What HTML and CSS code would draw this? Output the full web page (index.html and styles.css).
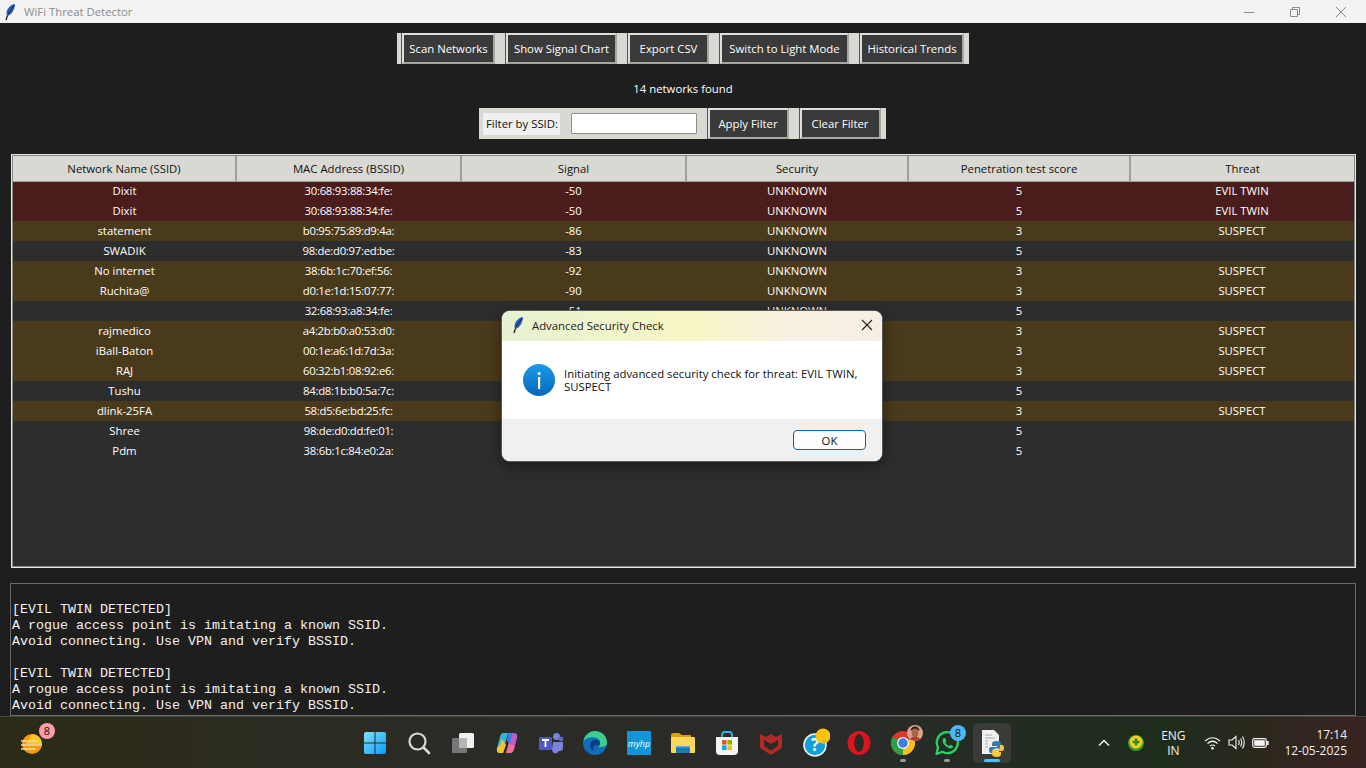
FILE: index.html
```html
<!DOCTYPE html>
<html lang="en">
<head>
    <meta charset="UTF-8">
    <title>WiFi Threat Detector</title>
    <link rel="stylesheet" href="styles.css">
</head>
<body>
    <svg class="defs" width="0" height="0">
        <symbol id="feather" viewBox="0 0 12 18">
            <path d="M2 17 L4 11" stroke="#111" stroke-width="1.2" fill="none"/>
            <path d="M3 13 C1 8 5 2 11 1 C11 6 8 12 3 13 Z" fill="#2f5fb0"/>
            <path d="M4 11 C6 8 8 5 10 2" stroke="#0b1c44" stroke-width="1" fill="none"/>
        </symbol>
    </svg>

    <header class="titlebar">
        <svg class="feather"><use href="#feather"/></svg>
        <span class="titlebar-text">WiFi Threat Detector</span>
        <div class="window-controls">
            <svg width="12" height="12" viewBox="0 0 12 12"><path d="M1 6.5 H11" stroke="#8a8a8a"/></svg>
            <svg width="12" height="12" viewBox="0 0 12 12"><path d="M1.5 3.5 H8.5 V10.5 H1.5 Z M3.5 3.5 V1.5 H10.5 V8.5 H8.5" stroke="#8a8a8a" fill="none"/></svg>
            <svg width="12" height="12" viewBox="0 0 12 12"><path d="M1 1 L11 11 M11 1 L1 11" stroke="#8a8a8a"/></svg>
        </div>
    </header>

    <main class="app">
        <div class="strip toolbar">
            <button class="tk-btn">Scan Networks</button>
            <button class="tk-btn">Show Signal Chart</button>
            <button class="tk-btn">Export CSV</button>
            <button class="tk-btn">Switch to Light Mode</button>
            <button class="tk-btn">Historical Trends</button>
        </div>

        <p class="status">14 networks found</p>

        <div class="strip filterbar">
            <label class="filter-label" for="ssid">Filter by SSID:</label>
            <input class="filter-input" id="ssid" type="text">
            <button class="tk-btn">Apply Filter</button>
            <button class="tk-btn">Clear Filter</button>
        </div>

        <div class="table-frame">
            <table class="networks">
                <thead>
                    <tr>
                        <th>Network Name (SSID)</th>
                        <th>MAC Address (BSSID)</th>
                        <th>Signal</th>
                        <th>Security</th>
                        <th>Penetration test score</th>
                        <th>Threat</th>
                    </tr>
                </thead>
                <tbody>
                    <tr class="evil"><td>Dixit</td><td>30:68:93:88:34:fe:</td><td>-50</td><td>UNKNOWN</td><td>5</td><td>EVIL TWIN</td></tr>
                    <tr class="evil"><td>Dixit</td><td>30:68:93:88:34:fe:</td><td>-50</td><td>UNKNOWN</td><td>5</td><td>EVIL TWIN</td></tr>
                    <tr class="suspect"><td>statement</td><td>b0:95:75:89:d9:4a:</td><td>-86</td><td>UNKNOWN</td><td>3</td><td>SUSPECT</td></tr>
                    <tr><td>SWADIK</td><td>98:de:d0:97:ed:be:</td><td>-83</td><td>UNKNOWN</td><td>5</td><td></td></tr>
                    <tr class="suspect"><td>No internet</td><td>38:6b:1c:70:ef:56:</td><td>-92</td><td>UNKNOWN</td><td>3</td><td>SUSPECT</td></tr>
                    <tr class="suspect"><td>Ruchita@</td><td>d0:1e:1d:15:07:77:</td><td>-90</td><td>UNKNOWN</td><td>3</td><td>SUSPECT</td></tr>
                    <tr><td></td><td>32:68:93:a8:34:fe:</td><td>-51</td><td>UNKNOWN</td><td>5</td><td></td></tr>
                    <tr class="suspect"><td>rajmedico</td><td>a4:2b:b0:a0:53:d0:</td><td></td><td></td><td>3</td><td>SUSPECT</td></tr>
                    <tr class="suspect"><td>iBall-Baton</td><td>00:1e:a6:1d:7d:3a:</td><td></td><td></td><td>3</td><td>SUSPECT</td></tr>
                    <tr class="suspect"><td>RAJ</td><td>60:32:b1:08:92:e6:</td><td></td><td></td><td>3</td><td>SUSPECT</td></tr>
                    <tr><td>Tushu</td><td>84:d8:1b:b0:5a:7c:</td><td></td><td></td><td>5</td><td></td></tr>
                    <tr class="suspect"><td>dlink-25FA</td><td>58:d5:6e:bd:25:fc:</td><td></td><td></td><td>3</td><td>SUSPECT</td></tr>
                    <tr><td>Shree</td><td>98:de:d0:dd:fe:01:</td><td></td><td></td><td>5</td><td></td></tr>
                    <tr><td>Pdm</td><td>38:6b:1c:84:e0:2a:</td><td></td><td></td><td>5</td><td></td></tr>
                </tbody>
            </table>
        </div>

        <pre class="log">

[EVIL TWIN DETECTED]
A rogue access point is imitating a known SSID.
Avoid connecting. Use VPN and verify BSSID.

[EVIL TWIN DETECTED]
A rogue access point is imitating a known SSID.
Avoid connecting. Use VPN and verify BSSID.</pre>
    </main>

    <div class="dialog">
        <div class="dialog-title">
            <svg class="feather"><use href="#feather"/></svg>
            <span>Advanced Security Check</span>
            <svg class="dialog-close" width="12" height="12" viewBox="0 0 12 12"><path d="M1 1 L11 11 M11 1 L1 11" stroke="#222" stroke-width="1.1"/></svg>
        </div>
        <div class="dialog-body">
            <svg class="info-icon" width="32" height="32" viewBox="0 0 32 32">
                <defs>
                    <linearGradient id="infoGrad" x1="0" y1="0" x2="0" y2="1">
                        <stop offset="0" stop-color="#1d9be6"/>
                        <stop offset="1" stop-color="#0668bd"/>
                    </linearGradient>
                </defs>
                <circle cx="16" cy="16" r="16" fill="url(#infoGrad)"/>
                <rect x="15" y="13" width="2.2" height="12" fill="#fff"/>
                <circle cx="16.1" cy="9.5" r="1.5" fill="#fff"/>
            </svg>
            <p class="dialog-text">Initiating advanced security check for threat: EVIL TWIN, SUSPECT</p>
        </div>
        <div class="dialog-footer">
            <button class="ok-btn">OK</button>
        </div>
    </div>

    <footer class="taskbar">
        <div class="task-left">
            <div class="task-icon">
                <svg width="26" height="26" viewBox="0 0 26 26">
                    <circle cx="14" cy="14" r="10" fill="#f59a0c"/>
                    <path d="M14 4 A10 10 0 0 1 24 14 H8 Z" fill="#ffc81e"/>
                    <path d="M3 11 H20 M3 15 H24 M3 19 H18" stroke="#f5d9a0" stroke-width="1.6"/>
                </svg>
                <span class="badge badge-pink">8</span>
            </div>
        </div>

        <div class="task-center">
            <div class="task-icon">
                <svg width="24" height="24" viewBox="0 0 24 24">
                    <defs>
                        <linearGradient id="winGrad" x1="0" y1="0" x2="1" y2="1">
                            <stop offset="0" stop-color="#7fe0fb"/>
                            <stop offset="1" stop-color="#0b9bf5"/>
                        </linearGradient>
                    </defs>
                    <path d="M1 3 Q1 1 3 1 H11.5 V11.5 H1 Z M12.5 1 H21 Q23 1 23 3 V11.5 H12.5 Z M1 12.5 H11.5 V23 H3 Q1 23 1 21 Z M12.5 12.5 H23 V21 Q23 23 21 23 H12.5 Z" fill="url(#winGrad)"/>
                </svg>
            </div>
            <div class="task-icon">
                <svg width="24" height="24" viewBox="0 0 24 24">
                    <circle cx="10.5" cy="10.5" r="8" fill="none" stroke="#d8d8d8" stroke-width="2.2"/>
                    <path d="M16.5 16.5 L22 22" stroke="#d8d8d8" stroke-width="2.6" stroke-linecap="round"/>
                </svg>
            </div>
            <div class="task-icon">
                <svg width="24" height="24" viewBox="0 0 24 24">
                    <rect x="8" y="2" width="15" height="15" rx="1.5" fill="#f0f0f0"/>
                    <rect x="1" y="7" width="15" height="15" rx="1.5" fill="#777"/>
                    <rect x="8" y="7" width="8" height="10" fill="#b5b5b5"/>
                </svg>
            </div>
            <div class="task-icon">
                <svg width="24" height="24" viewBox="0 0 24 24">
                    <path d="M8 2 H13 L8 22 H5 Q1 22 2 17 L5 6 Q6 2 8 2 Z" fill="#35b3d8"/>
                    <path d="M5 14 L7 8 L11 14 L8 22 H5 Q1 22 2 17 Z" fill="#f2c23a"/>
                    <path d="M16 22 H11 L16 2 H19 Q23 2 22 7 L19 18 Q18 22 16 22 Z" fill="#c45ac8"/>
                    <path d="M13 2 H18 L15 12 L12 10 Z" fill="#3d7fe0"/>
                    <path d="M11 22 L14 13 L20 15 L18 20 Q17 22 15 22 Z" fill="#f0709a"/>
                </svg>
            </div>
            <div class="task-icon">
                <svg width="26" height="26" viewBox="0 0 26 26">
                    <circle cx="18.5" cy="6.5" r="3.5" fill="#7b83d8"/>
                    <circle cx="23" cy="9" r="2.4" fill="#5f67c0"/>
                    <path d="M15 12 H25 V18 Q25 21 22 21 H21 Q19 24 16 23 Q14 22 14 19 Z" fill="#7b83d8"/>
                    <rect x="1" y="7" width="13" height="13" rx="1.5" fill="#5059c0"/>
                    <path d="M4 10 H11 M7.5 10 V17" stroke="#fff" stroke-width="1.8"/>
                </svg>
            </div>
            <div class="task-icon">
                <svg width="26" height="26" viewBox="0 0 26 26">
                    <circle cx="13" cy="13" r="12" fill="#0f6fb8"/>
                    <path d="M1.5 11 C3 4 9 1 13 1 C20 1 25 6 25 13 C25 16 22 17 18 17 C14 17 19 15 18 11 C17 7 6 5 1.5 11 Z" fill="#3ecf8e"/>
                    <path d="M8 15 C8 11 12 9 15 10 C18 11 19 14 17 16 C14 14 10 16 12 21 C9 20 8 18 8 15 Z" fill="#0a3f86"/>
                </svg>
            </div>
            <div class="task-icon">
                <svg width="24" height="24" viewBox="0 0 24 24">
                    <rect width="24" height="24" fill="#0f96d7"/>
                    <text class="myhp-text" x="12" y="15.5" text-anchor="middle">myhp</text>
                </svg>
            </div>
            <div class="task-icon">
                <svg width="24" height="24" viewBox="0 0 24 24">
                    <path d="M0 4 Q0 2 2 2 H8 L11 4 H20 V9 H0 Z" fill="#d9a00f"/>
                    <rect y="6" width="24" height="16" rx="1" fill="#fcd75a"/>
                    <rect x="5" y="15" width="14" height="7" rx="1" fill="#1a78c2"/>
                    <rect x="5" y="15" width="14" height="1.5" fill="#52aee8"/>
                </svg>
            </div>
            <div class="task-icon">
                <svg width="24" height="24" viewBox="0 0 24 24">
                    <path d="M7 7 V4 Q7 1 10 1 H14 Q17 1 17 4 V7" stroke="#2fb5e8" stroke-width="1.8" fill="none"/>
                    <path d="M1 6 H23 V20 Q23 24 19 24 H5 Q1 24 1 20 Z" fill="#f4f4f4"/>
                    <rect x="7" y="9" width="4.6" height="4.6" fill="#f25022"/>
                    <rect x="12.4" y="9" width="4.6" height="4.6" fill="#7fba00"/>
                    <rect x="7" y="14.4" width="4.6" height="4.6" fill="#00a4ef"/>
                    <rect x="12.4" y="14.4" width="4.6" height="4.6" fill="#ffb900"/>
                </svg>
            </div>
            <div class="task-icon">
                <svg width="24" height="24" viewBox="0 0 24 24">
                    <path d="M1 3 L7 6 L12 3 L17 6 L23 3 V17 L12 24 L1 17 Z M5 9 V15 L12 19.5 L19 15 V9 L12 13 Z" fill="#b02a26" fill-rule="evenodd"/>
                </svg>
            </div>
            <div class="task-icon">
                <svg width="30" height="30" viewBox="0 0 30 30">
                    <circle cx="15" cy="17" r="11" fill="#12a0dc" stroke="#f2f2f2" stroke-width="1.6"/>
                    <text class="help-text" x="15" y="23" text-anchor="middle">?</text>
                    <circle cx="23" cy="8" r="7.5" fill="#fcc20a"/>
                </svg>
            </div>
            <div class="task-icon">
                <svg width="24" height="24" viewBox="0 0 24 24">
                    <ellipse cx="12" cy="12" rx="11.5" ry="12" fill="#d9151d"/>
                    <ellipse cx="12" cy="12" rx="4.8" ry="9" fill="#2a2b26"/>
                </svg>
            </div>
            <div class="task-icon has-dot">
                <svg width="26" height="26" viewBox="0 0 26 26">
                    <circle cx="13" cy="13" r="12" fill="#d93a2e"/>
                    <path d="M13 13 L2.6 7 A12 12 0 0 0 13 25 Z" fill="#2f9e48"/>
                    <path d="M13 13 L23.4 7 A12 12 0 0 1 13 25 Z" fill="#f6c120"/>
                    <circle cx="13" cy="13" r="6" fill="#f2f2f2"/>
                    <circle cx="13" cy="13" r="4.7" fill="#3a7ee8"/>
                </svg>
                <svg class="avatar" width="16" height="16" viewBox="0 0 16 16">
                    <circle cx="8" cy="8" r="8" fill="#e0a090"/>
                    <path d="M3.5 6 Q4 1.5 8 1.5 Q12 1.5 12.5 6 L11 5 H5 Z" fill="#2c1c14"/>
                    <ellipse cx="8" cy="8" rx="3.4" ry="4.4" fill="#a9684a"/>
                    <path d="M2.5 14 Q8 9.5 13.5 14 Q8 17.5 2.5 14 Z" fill="#b03a30"/>
                </svg>
            </div>
            <div class="task-icon has-dot">
                <svg width="26" height="26" viewBox="0 0 26 26">
                    <path d="M2.5 24 L4 17.5 A10.5 10.5 0 1 1 8.2 21.8 Z" fill="none" stroke="#25d366" stroke-width="2.3" stroke-linejoin="round"/>
                    <path d="M9 8.5 L11 8 L12.5 11 L11.3 12.5 Q12.5 15 15 16 L16.5 14.7 L19 16.3 L18.5 18 Q15.5 19.5 11.5 16 Q7.5 12.5 9 8.5 Z" fill="#25d366"/>
                </svg>
                <span class="badge badge-blue">8</span>
            </div>
            <div class="task-icon active">
                <svg width="26" height="28" viewBox="0 0 26 28">
                    <path d="M3 1 H15 L20 6 V25 H3 Z" fill="#f1f1f1"/>
                    <path d="M6 6 H13 M6 9 H16 M6 12 H9 M6 15 H9 M6 18 H9" stroke="#a8a8a8"/>
                    <path d="M17 12 Q13 12 13 15 V17 H18 V18 H12 Q10 18 10 21 Q10 24 12 24 H14 V22 Q14 19.5 17 19.5 H20 Q22 19.5 22 17.5 V15 Q22 12 17 12 Z" fill="#3b78ab"/>
                    <path d="M18 28 Q22 28 22 25 V23 H17 V22 H23 Q25 22 25 19 Q25 16 23 16 H21 V18 Q21 20.5 18 20.5 H15 Q13 20.5 13 22.5 V25 Q13 28 18 28 Z" fill="#f7c93e"/>
                </svg>
            </div>
        </div>

        <div class="task-tray">
            <svg class="tray-chevron" width="12" height="8" viewBox="0 0 12 8"><path d="M1 6.5 L6 1.5 L11 6.5" fill="none" stroke="#f2f2f2" stroke-width="1.5"/></svg>
            <svg class="tray-guard" width="16" height="16" viewBox="0 0 16 16">
                <circle cx="8" cy="8" r="8" fill="#3f9a2d"/>
                <circle cx="8" cy="7" r="6.5" fill="#f0d21e"/>
                <path d="M8 3.5 V10.5 M4.5 7 H11.5" stroke="#2e8a2b" stroke-width="2.6"/>
            </svg>
            <div class="tray-lang"><span>ENG</span><span>IN</span></div>
            <div class="tray-status">
                <svg width="17" height="14" viewBox="0 0 17 14">
                    <path d="M1 5 Q8.5 -1.5 16 5 M3.5 7.5 Q8.5 3 13.5 7.5 M6 10 Q8.5 8 11 10" fill="none" stroke="#f2f2f2" stroke-width="1.2"/>
                    <circle cx="8.5" cy="12.3" r="1.3" fill="#f2f2f2"/>
                </svg>
                <svg width="17" height="15" viewBox="0 0 17 15">
                    <path d="M1 5 H4 L8 1.5 V13.5 L4 10 H1 Z" fill="none" stroke="#f2f2f2" stroke-width="1.1"/>
                    <path d="M10.5 5 Q12 7.5 10.5 10 M12.5 3.5 Q15 7.5 12.5 11.5 M14.5 1.5 Q18 7.5 14.5 13.5" fill="none" stroke="#f2f2f2" stroke-width="1.1"/>
                </svg>
                <svg width="17" height="10" viewBox="0 0 17 10">
                    <rect x="0.7" y="0.7" width="13.6" height="8.6" rx="1.8" fill="none" stroke="#f2f2f2" stroke-width="1.2"/>
                    <rect x="2.2" y="2.2" width="10.6" height="5.6" fill="#f2f2f2"/>
                    <rect x="15" y="3" width="1.6" height="4" fill="#f2f2f2"/>
                </svg>
            </div>
            <div class="tray-clock"><span>17:14</span><span>12-05-2025</span></div>
        </div>
    </footer>
</body>
</html>
```

FILE: styles.css
```css
* {
    box-sizing: border-box;
}

html, body {
    margin: 0;
    height: 768px;
    overflow: hidden;
}

body {
    font-family: 'Open Sans', 'Noto Sans', sans-serif;
    font-size: 11.35px;
    background-color: #1e1e1e;
    display: flex;
    flex-direction: column;
    position: relative;
}

.defs {
    position: absolute;
}

.feather {
    width: 12px;
    height: 18px;
    flex: none;
}

/* title bar */
.titlebar {
    height: 23px;
    flex: none;
    background-color: #f3f3f3;
    display: flex;
    align-items: center;
    padding-left: 4px;
    color: #8c8c8c;
}

.titlebar-text {
    margin-left: 8px;
}

.window-controls {
    margin-left: auto;
    display: flex;
    gap: 34px;
    padding-right: 19px;
}

/* main window */
.app {
    flex: 1;
    min-height: 0;
    display: flex;
    flex-direction: column;
    align-items: center;
    padding: 10px 10px 0;
}

.strip {
    background-color: #d9d9d4;
    display: flex;
    align-items: center;
    height: 31px;
    padding: 0 5px;
    gap: 11px;
}

.tk-btn {
    font-family: inherit;
    font-size: 11.35px;
    height: 100%;
    padding: 0;
    color: #ffffff;
    background-color: #3a3a3a;
    border: 2px solid;
    border-color: #dededa #a8a79f #a8a79f #dededa;
    box-shadow: -1px 0 0 #55554f;
}

.toolbar .tk-btn:nth-child(1) { width: 93px; }
.toolbar .tk-btn:nth-child(2) { width: 111px; }
.toolbar .tk-btn:nth-child(3) { width: 81px; }
.toolbar .tk-btn:nth-child(4) { width: 129px; }
.toolbar .tk-btn:nth-child(5) { width: 104px; }

.status {
    margin: 16px 0 11px;
    height: 17px;
    line-height: 17px;
    color: #ffffff;
}

.filterbar {
    padding: 0 5px 0 4px;
    margin-right: 2px;
}

.filterbar .tk-btn {
    width: 81px;
}

.filter-label {
    background-color: #f0f0f0;
    color: #111111;
    height: 22px;
    line-height: 22px;
    width: 77px;
    padding-left: 2px;
    text-align: center;
}

.filter-input {
    width: 126px;
    height: 21px;
    background-color: #ffffff;
    border: 1px solid #8f8e86;
    border-radius: 1px;
}

/* network table */
.table-frame {
    align-self: stretch;
    margin: 15px 0 0 1px;
    height: 414px;
    border: 1px solid #e4e4e0;
    outline: 1px solid #8a8a84;
    outline-offset: -2px;
    background-color: #2d2d2d;
    padding: 1px;
}

.networks {
    width: 100%;
    table-layout: fixed;
    border-collapse: collapse;
    color: #ffffff;
    text-align: center;
}

.networks th {
    height: 25px;
    padding: 0;
    font-weight: normal;
    color: #111111;
    background-color: #d9d9d4;
    border-right: 2px solid #a09f98;
    border-bottom: 1px solid #a09f98;
}

.networks th:nth-child(1) { width: 223px; }
.networks th:nth-child(2) { width: 225px; }
.networks th:nth-child(3) { width: 225px; }
.networks th:nth-child(4) { width: 222px; }
.networks th:nth-child(5) { width: 222px; }
.networks th:last-child { border-right: none; }

.networks td {
    height: 20px;
    padding: 0 0 2px;
}

.networks td:nth-child(2) {
    letter-spacing: -0.28px;
}

.evil {
    background-color: #4a1c1c;
}

.suspect {
    background-color: #4a3a1c;
}

/* log */
.log {
    align-self: stretch;
    margin: 15px 0 0;
    height: 133px;
    padding: 2px 1px 0;
    overflow: hidden;
    background-color: #1e1e1e;
    border: 1px solid #6a6a6a;
    color: #f2f2f2;
    font-family: 'Liberation Mono', monospace;
    font-size: 13.33px;
    line-height: 16px;
}

/* message box */
.dialog {
    position: absolute;
    left: 502px;
    top: 311px;
    width: 380px;
    height: 150px;
    border-radius: 8px;
    overflow: hidden;
    background-color: #ffffff;
    display: flex;
    flex-direction: column;
    box-shadow: 0 0 0 1px #5a5a5a, 0 4px 14px rgba(0, 0, 0, 0.45);
}

.dialog-title {
    height: 30px;
    flex: none;
    display: flex;
    align-items: center;
    padding: 0 0 2px 10px;
    gap: 8px;
    color: #222222;
    background: linear-gradient(to right, #e6f2d2, #f8f6c4 50%, #f8f0e2 75%, #f7efe4);
}

.dialog-close {
    margin-left: auto;
    margin-right: 9px;
}

.dialog-body {
    flex: 1;
    display: flex;
    align-items: center;
    padding: 0 20px 0 21px;
    gap: 9px;
}

.info-icon {
    flex: none;
}

.dialog-text {
    margin: 0;
    color: #111111;
    line-height: 13px;
    width: 300px;
}

.dialog-footer {
    height: 42px;
    flex: none;
    background-color: #f0f0f0;
    display: flex;
    justify-content: flex-end;
    align-items: center;
    padding-right: 16px;
}

.ok-btn {
    width: 73px;
    height: 20px;
    padding: 0;
    font-family: inherit;
    font-size: 11.35px;
    color: #111111;
    background-color: #fdfdfd;
    border: 1px solid #0067c0;
    border-radius: 4px;
}

/* taskbar */
.taskbar {
    height: 52px;
    flex: none;
    display: grid;
    grid-template-columns: 1fr auto 1fr;
    align-items: center;
    border-top: 1px solid #47473f;
    color: #f2f2f2;
    background: linear-gradient(to right, #2c2b17, #2b2b26 30%, #2a2b29 60%, #1e2c1c 85%, #3a2320);
}

.task-left {
    padding-left: 9px;
}

.task-center {
    display: flex;
}

.task-icon {
    width: 44px;
    height: 40px;
    display: flex;
    align-items: center;
    justify-content: center;
    position: relative;
}

.task-icon.active {
    background-color: #3a3b36;
    border-radius: 5px;
    width: 38px;
    margin: 0 2px 0 4px;
}

.task-icon.active::after {
    content: "";
    position: absolute;
    bottom: 1px;
    left: 11px;
    width: 16px;
    height: 3px;
    border-radius: 2px;
    background-color: #4cc2ff;
}

.task-icon.has-dot::after {
    content: "";
    position: absolute;
    bottom: 1px;
    left: 19px;
    width: 6px;
    height: 3px;
    border-radius: 2px;
    background-color: #9a9a9a;
}

.badge {
    position: absolute;
    width: 16px;
    height: 16px;
    border-radius: 50%;
    color: #111111;
    font-size: 11px;
    line-height: 16px;
    text-align: center;
}

.badge-pink {
    top: 0;
    left: 30px;
    background-color: #ff9cab;
}

.badge-blue {
    top: 2px;
    left: 25px;
    background-color: #4cb8f5;
}

.avatar {
    position: absolute;
    top: 2px;
    left: 26px;
}

.myhp-text {
    font-family: 'Open Sans', sans-serif;
    font-size: 9px;
    font-style: italic;
    fill: #ffffff;
}

.help-text {
    font-family: 'Open Sans', sans-serif;
    font-size: 17px;
    font-weight: bold;
    fill: #ffffff;
}

.task-tray {
    display: flex;
    align-items: center;
    justify-self: end;
    padding-right: 19px;
}

.tray-chevron {
    margin-right: 18px;
}

.tray-lang {
    margin: 0 17px 0 15px;
    width: 28px;
    display: flex;
    flex-direction: column;
    align-items: center;
    line-height: 15px;
    font-size: 12px;
}

.tray-status {
    display: flex;
    align-items: center;
    gap: 7px;
}

.tray-clock {
    margin-left: 15px;
    display: flex;
    flex-direction: column;
    align-items: flex-end;
    font-size: 12px;
    line-height: 16px;
}
```
